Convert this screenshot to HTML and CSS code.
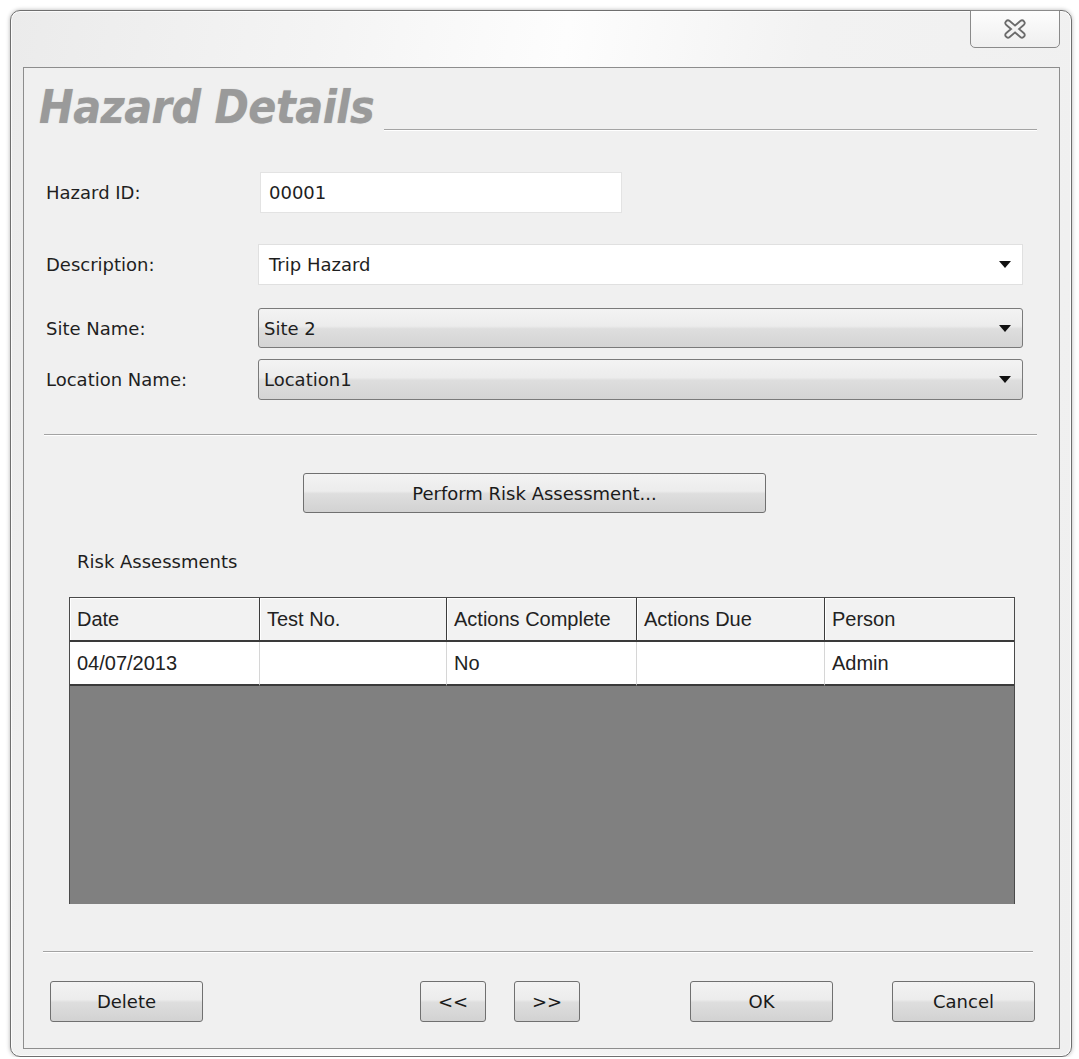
FILE: index.html
```html
<!DOCTYPE html>
<html lang="en">
<head>
    <meta charset="UTF-8">
    <meta name="viewport" content="width=device-width, initial-scale=1.0">
    <title>Hazard Details</title>
    <link rel="stylesheet" href="styles.css">
</head>
<body>
<div class="window">
    <div class="titlebar">
        <button class="close-btn" aria-label="Close">
            <svg width="24" height="20" viewBox="0 0 24 20">
                <path d="M5 4 L19 16 M19 4 L5 16" stroke="#6b6b6b" stroke-width="7" stroke-linecap="round" fill="none"/>
                <path d="M5 4 L19 16 M19 4 L5 16" stroke="#f4f4f4" stroke-width="3.4" stroke-linecap="round" fill="none"/>
            </svg>
        </button>
    </div>

    <div class="client">
        <div class="heading">
            <h1>Hazard Details</h1>
            <div class="heading-rule"></div>
        </div>

        <div class="field-row row-id">
            <span class="field-label">Hazard ID:</span>
            <div class="textbox id-box">00001</div>
        </div>
        <div class="field-row row-desc">
            <span class="field-label">Description:</span>
            <div class="combo combo-edit">
                <span>Trip Hazard</span>
                <svg class="arrow" width="12" height="7" viewBox="0 0 12 7"><polygon points="0,0 12,0 6,7" fill="#111"/></svg>
            </div>
        </div>
        <div class="field-row row-site">
            <span class="field-label">Site Name:</span>
            <div class="combo combo-list">
                <span>Site 2</span>
                <svg class="arrow" width="12" height="7" viewBox="0 0 12 7"><polygon points="0,0 12,0 6,7" fill="#111"/></svg>
            </div>
        </div>
        <div class="field-row row-loc">
            <span class="field-label">Location Name:</span>
            <div class="combo combo-list">
                <span>Location1</span>
                <svg class="arrow" width="12" height="7" viewBox="0 0 12 7"><polygon points="0,0 12,0 6,7" fill="#111"/></svg>
            </div>
        </div>

        <div class="separator sep-top"></div>

        <div class="action-row">
            <button class="btn btn-wide">Perform Risk Assessment...</button>
        </div>

        <div class="section-label">Risk Assessments</div>

        <div class="grid">
            <div class="grid-head">
                <div class="head-cell">Date</div>
                <div class="head-cell">Test No.</div>
                <div class="head-cell">Actions Complete</div>
                <div class="head-cell">Actions Due</div>
                <div class="head-cell">Person</div>
            </div>
            <div class="grid-row">
                <div class="cell">04/07/2013</div>
                <div class="cell"></div>
                <div class="cell">No</div>
                <div class="cell"></div>
                <div class="cell">Admin</div>
            </div>
        </div>

        <div class="separator sep-bottom"></div>

        <div class="footer">
            <button class="btn btn-delete">Delete</button>
            <button class="btn btn-nav btn-prev">&lt;&lt;</button>
            <button class="btn btn-nav btn-next">&gt;&gt;</button>
            <button class="btn btn-ok">OK</button>
            <button class="btn btn-cancel">Cancel</button>
        </div>
    </div>
</div>
</body>
</html>
```

FILE: styles.css
```css
body {
    margin: 0;
    background: #ffffff;
    font-family: "DejaVu Sans", sans-serif;
    color: #1e1e1e;
}

/* window frame */
.window {
    box-sizing: border-box;
    width: 1062px;
    height: 1047px;
    margin: 10px 0 0 10px;
    padding: 0 11px 7px 12px;
    display: flex;
    flex-direction: column;
    border: 1px solid #6f6f6f;
    border-radius: 10px;
    background: linear-gradient(100deg, #ebebeb 0%, #f4f4f4 25%, #fdfdfd 45%, #f2f2f2 65%, #efefef 100%);
    box-shadow: 0 0 4px rgba(0, 0, 0, 0.3), inset 0 0 0 1px rgba(255, 255, 255, 0.8);
}

.titlebar {
    height: 56px;
    display: flex;
    justify-content: flex-end;
    align-items: flex-start;
}

.close-btn {
    width: 90px;
    height: 38px;
    margin-top: -1px;
    padding: 0;
    display: flex;
    align-items: center;
    justify-content: center;
    border: 1px solid #8a8a8a;
    border-radius: 0 0 5px 5px;
    background: linear-gradient(#fdfdfd, #efefef);
}

.client {
    flex: 1;
    display: flex;
    flex-direction: column;
    border: 1px solid #8d8d8d;
    background: #f0f0f0;
}

/* heading */
.heading {
    display: flex;
    align-items: flex-end;
    padding: 18px 22px 0 15px;
}

.heading h1 {
    margin: 0;
    font-family: "DejaVu Sans Condensed", "DejaVu Sans", sans-serif;
    font-stretch: semi-condensed;
    font-size: 46px;
    line-height: 43px;
    font-weight: bold;
    font-style: italic;
    letter-spacing: -0.5px;
    color: #9a9a9a;
    text-shadow: 0 0 1px rgba(150, 150, 150, 0.6);
}

.heading-rule {
    flex: 1;
    margin: 0 0 -1px 10px;
    border-bottom: 1px solid #a4a4a4;
    box-shadow: 0 1px 0 #ffffff;
}

/* form fields */
.field-row {
    display: flex;
    align-items: center;
    padding: 0 36px 0 22px;
}

.row-id { margin-top: 43px; }
.row-desc { margin-top: 31px; }
.row-site { margin-top: 23px; }
.row-loc { margin-top: 11px; }

.field-label {
    width: 212px;
    font-size: 18px;
    color: #1f1f1f;
}

.textbox {
    box-sizing: border-box;
    height: 41px;
    display: flex;
    align-items: center;
    padding-left: 8px;
    background: #ffffff;
    border: 1px solid #e3e3e3;
    font-size: 18px;
}

.id-box {
    width: 362px;
    margin-left: 2px;
}

.combo {
    flex: 1;
    box-sizing: border-box;
    height: 41px;
    display: flex;
    align-items: center;
    justify-content: space-between;
    padding: 0 11px 0 10px;
    font-size: 18px;
}

.combo-edit {
    background: #ffffff;
    border: 1px solid #e0e0e0;
}

.combo-list {
    height: 40px;
    padding-left: 5px;
    border: 1px solid #7a7a7a;
    border-radius: 3px;
    background: linear-gradient(#f3f3f3 0%, #ececec 45%, #dedede 52%, #d4d4d4 100%);
}

.row-loc .combo-list {
    height: 41px;
}

.separator {
    height: 0;
    border-top: 1px solid #a3a3a3;
    border-bottom: 1px solid #ffffff;
}

.sep-top { margin: 34px 22px 0 20px; }
.sep-bottom { margin: 47px 26px 0 19px; }

/* buttons */
.btn {
    box-sizing: border-box;
    height: 41px;
    padding: 0;
    border: 1px solid #707070;
    border-radius: 3px;
    background: linear-gradient(#f3f3f3 0%, #ececec 45%, #dedede 52%, #d2d2d2 100%);
    font-family: "DejaVu Sans", sans-serif;
    font-size: 18px;
    color: #1a1a1a;
}

.action-row {
    margin-top: 37px;
    padding-left: 279px;
}

.btn-wide {
    width: 463px;
    height: 40px;
}

.section-label {
    margin: 38px 0 0 53px;
    font-size: 18px;
    line-height: 22px;
}

/* risk assessment grid */
.grid {
    box-sizing: border-box;
    width: 946px;
    height: 307px;
    margin: 24px 0 0 45px;
    background: #808080;
    border: 1px solid #4a4a4a;
    border-bottom: none;
    font-family: "Liberation Sans", Arial, sans-serif;
    font-size: 20px;
    color: #222222;
}

.grid-head,
.grid-row {
    display: grid;
    grid-template-columns: 190px 187px 190px 188px 1fr;
}

.head-cell {
    height: 42px;
    display: flex;
    align-items: center;
    padding-left: 7px;
    background: #f2f2f2;
    border-right: 1px solid #3c3c3c;
    border-bottom: 2px solid #3a3a3a;
    box-shadow: inset 1px 1px 0 #ffffff;
}

.cell {
    height: 42px;
    display: flex;
    align-items: center;
    padding-left: 7px;
    background: #ffffff;
    border-right: 1px solid #d6d6d6;
    border-bottom: 2px solid #3a3a3a;
}

.head-cell:last-child,
.cell:last-child {
    border-right: none;
}

/* footer buttons */
.footer {
    display: flex;
    margin-top: 28px;
    padding: 0 24px 0 26px;
}

.btn-delete { width: 153px; }
.btn-nav { width: 66px; }
.btn-prev { margin-left: 217px; }
.btn-next { margin-left: 28px; }
.btn-ok { width: 143px; margin-left: 110px; }
.btn-cancel { width: 143px; margin-left: 59px; }
```
